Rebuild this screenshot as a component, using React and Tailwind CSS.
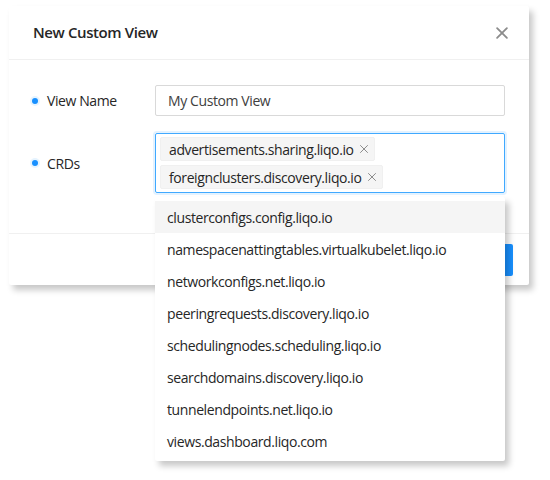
import React from "react";

const items = [
  "clusterconfigs.config.liqo.io",
  "namespacenattingtables.virtualkubelet.liqo.io",
  "networkconfigs.net.liqo.io",
  "peeringrequests.discovery.liqo.io",
  "schedulingnodes.scheduling.liqo.io",
  "searchdomains.discovery.liqo.io",
  "tunnelendpoints.net.liqo.io",
  "views.dashboard.liqo.com",
];

function SmallX({ size = 10, stroke = 1.2, color = "#8c8c8c" }) {
  return (
    <svg width={size} height={size} viewBox="0 0 10 10" fill="none">
      <path d="M1.5 1.5L8.5 8.5M8.5 1.5L1.5 8.5" stroke={color} strokeWidth={stroke} strokeLinecap="round" />
    </svg>
  );
}

function Dot() {
  return (
    <span className="-ml-[3px] flex h-[10px] w-[10px] items-center justify-center rounded-full bg-[#e6f4ff]">
      <span className="h-[6px] w-[6px] rounded-full bg-[#1890ff]" />
    </span>
  );
}

function Tag({ label }) {
  return (
    <span className="flex h-[24px] items-center gap-[5px] self-start rounded-[2px] border border-[#f0f0f0] bg-[#f5f5f5] pl-[8px] pr-[5px] text-[14px] text-[#262626]">
      {label}
      <SmallX size={10} stroke={1} color="#8c8c8c" />
    </span>
  );
}

export default function App() {
  return (
    <div
      className="relative h-[480px] w-[550px] bg-white pl-[9px] pt-[6px] tracking-[-0.4px]"
      style={{ fontFamily: '"Open Sans", "Noto Sans", sans-serif' }}
    >
      <div className="flex h-[279px] w-[520px] flex-col rounded-[2px] bg-white shadow-[4px_5px_6px_rgba(0,0,0,0.22)]">
        <div className="flex h-[54px] items-center justify-between border-b border-[#f0f0f0] pl-[24px] pr-[20px]">
          <span className="text-[15px] font-semibold tracking-[-0.4px] text-[#262626]">New Custom View</span>
          <SmallX size={14} stroke={1.3} color="#8c8c8c" />
        </div>
        <div className="flex flex-1 flex-col gap-[17px] px-[24px] pt-[25px]">
          <div className="flex items-center">
            <div className="flex w-[122px] items-center gap-[7px] text-[14px] text-[#262626]">
              <Dot />
              View Name
            </div>
            <div className="flex h-[31px] w-[350px] items-center rounded-[2px] border border-[#d9d9d9] px-[12px] text-[14px] text-[#404040]">
              My Custom View
            </div>
          </div>
          <div className="flex items-center">
            <div className="flex w-[122px] items-center gap-[7px] text-[14px] text-[#262626]">
              <Dot />
              CRDs
            </div>
            <div className="flex h-[60px] w-[350px] flex-col gap-[4px] rounded-[2px] border border-[#40a9ff] px-[4px] pt-[3px] shadow-[0_0_0_2px_rgba(24,144,255,0.12)]">
              <Tag label="advertisements.sharing.liqo.io" />
              <Tag label="foreignclusters.discovery.liqo.io" />
            </div>
          </div>
        </div>
        <div className="flex h-[52px] items-center justify-end border-t border-[#f0f0f0] px-[16px]">
          <div className="h-[32px] w-[60px] rounded-[2px] bg-[#1890ff]" />
        </div>
      </div>

      <div className="absolute left-[155px] top-[197px] w-[350px] rounded-[2px] bg-white py-[4px] shadow-[4px_5px_6px_rgba(0,0,0,0.22)]">
        {items.map((it, i) => (
          <div
            key={it}
            className={`flex h-[32px] items-center px-[12px] text-[14px] text-[#262626] ${i === 0 ? "bg-[#f5f5f5]" : ""}`}
          >
            {it}
          </div>
        ))}
      </div>
    </div>
  );
}
